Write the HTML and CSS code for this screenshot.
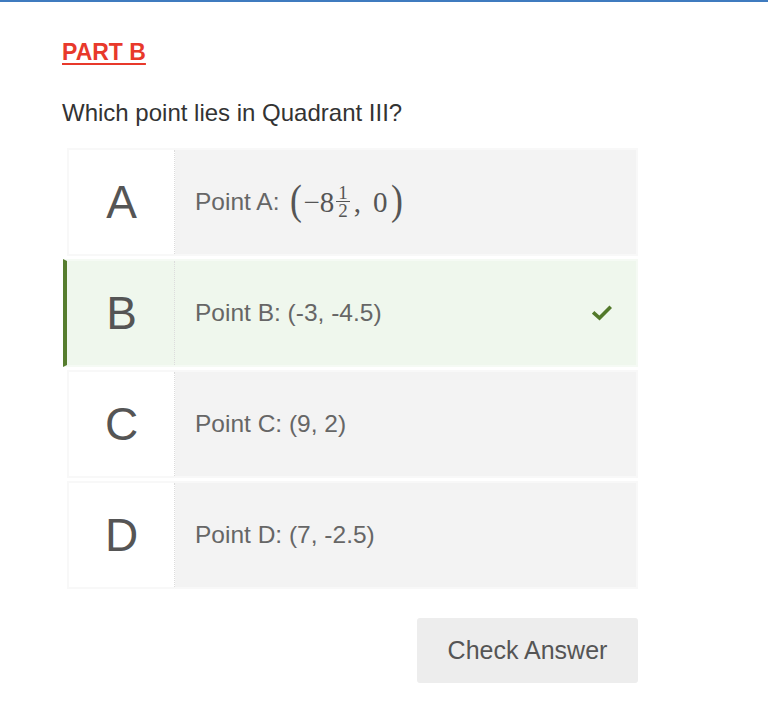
FILE: index.html
```html
<!DOCTYPE html>
<html>
<head>
<meta charset="utf-8">
<link rel="stylesheet" href="styles.css">
</head>
<body>
<div class="topbar"></div>
<main class="content">
  <h2 class="part">PART B</h2>
  <p class="question">Which point lies in Quadrant III?</p>
  <div class="options">
    <div class="option">
      <div class="letter">A</div>
      <div class="label"><span>Point A:</span><span class="math"><span class="paren">(</span><span class="mnum">−8</span><span class="frac"><span class="num">1</span><span class="den">2</span></span><span class="mnum comma">,</span><span class="mnum zero">0</span><span class="paren">)</span></span></div>
    </div>
    <div class="option selected">
      <div class="letter">B</div>
      <div class="label">Point B: (-3, -4.5)</div>
      <svg class="check" width="20" height="16" viewBox="0 0 20 16"><path d="M2.5 8.5 L7.5 13 L17.5 3" fill="none" stroke="#52792a" stroke-width="3.6" stroke-linecap="square"/></svg>
    </div>
    <div class="option">
      <div class="letter">C</div>
      <div class="label">Point C: (9, 2)</div>
    </div>
    <div class="option">
      <div class="letter">D</div>
      <div class="label">Point D: (7, -2.5)</div>
    </div>
  </div>
  <div class="actions">
    <button class="check-btn">Check Answer</button>
  </div>
</main>
</body>
</html>
```
FILE: styles.css
```css
html, body {
  margin: 0;
  padding: 0;
  background: #ffffff;
  font-family: "Liberation Sans", Arial, Helvetica, sans-serif;
}
.topbar {
  height: 2px;
  background: #3f7bbf;
}
.content {
  width: 576px;
  margin-left: 62px;
  padding-top: 37px;
}
.part {
  margin: 0;
  font-size: 23px;
  line-height: 27px;
  font-weight: bold;
  color: #e8392b;
  text-decoration: underline;
  text-decoration-thickness: 2px;
  text-underline-offset: 3px;
}
.question {
  margin: 32px 0 0;
  font-size: 24px;
  line-height: 29px;
  color: #333333;
}
.options {
  margin: 21px 0 0 5px;
  display: flex;
  flex-direction: column;
  gap: 3px;
}
.option {
  height: 108px;
  box-sizing: border-box;
  border: 2px solid #f8f8f8;
  background: #f3f3f3;
  display: flex;
  align-items: center;
}
.option.selected {
  background: #eff7ed;
  border-color: #f5faf4;
  border-left: 4px solid #567d2e;
  margin-left: -4px;
  padding-left: 2px;
}
.letter {
  width: 105px;
  align-self: stretch;
  display: flex;
  align-items: center;
  justify-content: center;
  background: #ffffff;
  border-right: 1px dotted #dcdcdc;
  font-size: 46px;
  color: #555555;
}
.selected .letter {
  background: #eff7ed;
}
.label {
  flex: 1;
  padding-left: 20px;
  font-size: 24.5px;
  color: #666666;
  display: flex;
  align-items: center;
  white-space: pre;
}
.math {
  display: inline-flex;
  align-items: center;
  font-family: "Liberation Serif", "Times New Roman", serif;
  color: #555555;
  margin-left: 10px;
}
.paren {
  font-size: 42px;
  line-height: 1;
  transform: scaleX(0.85);
  position: relative;
  top: -2px;
}
.mnum {
  font-size: 29px;
  line-height: 1.2;
}
.comma {
  margin-left: 2px;
}
.zero {
  margin-left: 12px;
  margin-right: 2px;
}
.frac {
  display: inline-flex;
  flex-direction: column;
  align-items: center;
  font-size: 19px;
  line-height: 17px;
  margin: 0 2px;
  position: relative;
  top: -1px;
}
.num {
  border-bottom: 1px solid #555555;
  padding: 0 2px;
}
.den {
  padding: 0 2px;
}
.check {
  margin-right: 24px;
}
.actions {
  display: flex;
  justify-content: flex-end;
  margin-top: 29px;
}
.check-btn {
  width: 221px;
  height: 65px;
  border: none;
  border-radius: 3px;
  background: #ededed;
  font-family: "Liberation Sans", Arial, sans-serif;
  font-size: 25px;
  color: #555555;
}
```
